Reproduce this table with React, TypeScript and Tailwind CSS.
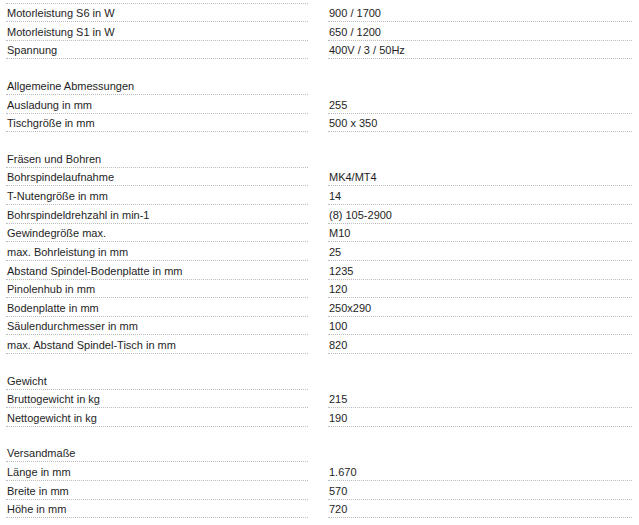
type Row = { label: string; value?: string; header?: boolean; spacer?: boolean };

const rows: Row[] = [
  { label: 'Motorleistung S6 in W', value: '900 / 1700' },
  { label: 'Motorleistung S1 in W', value: '650 / 1200' },
  { label: 'Spannung', value: '400V / 3 / 50Hz' },
  { label: '', spacer: true },
  { label: 'Allgemeine Abmessungen', header: true },
  { label: 'Ausladung in mm', value: '255' },
  { label: 'Tischgröße in mm', value: '500 x 350' },
  { label: '', spacer: true },
  { label: 'Fräsen und Bohren', header: true },
  { label: 'Bohrspindelaufnahme', value: 'MK4/MT4' },
  { label: 'T-Nutengröße in mm', value: '14' },
  { label: 'Bohrspindeldrehzahl in min-1', value: '(8) 105-2900' },
  { label: 'Gewindegröße max.', value: 'M10' },
  { label: 'max. Bohrleistung in mm', value: '25' },
  { label: 'Abstand Spindel-Bodenplatte in mm', value: '1235' },
  { label: 'Pinolenhub in mm', value: '120' },
  { label: 'Bodenplatte in mm', value: '250x290' },
  { label: 'Säulendurchmesser in mm', value: '100' },
  { label: 'max. Abstand Spindel-Tisch in mm', value: '820' },
  { label: '', spacer: true },
  { label: 'Gewicht', header: true },
  { label: 'Bruttogewicht in kg', value: '215' },
  { label: 'Nettogewicht in kg', value: '190' },
  { label: '', spacer: true },
  { label: 'Versandmaße', header: true },
  { label: 'Länge in mm', value: '1.670' },
  { label: 'Breite in mm', value: '570' },
  { label: 'Höhe in mm', value: '720' },
];

export default function App() {
  return (
    <div className="w-[639px] h-[525px] overflow-hidden bg-white text-[#1e1e1e] text-[11px] leading-none font-['Liberation_Sans',Arial,sans-serif]">
      {/* tail of the section above, only its rule is visible */}
      <div className="flex h-[3.5px]">
        <div className="ml-[6px] w-[302px] border-b border-dotted border-[#bdbdbd]" />
      </div>
      {rows.map((r, i) =>
        r.spacer ? (
          <div key={i} className="h-[16.85px]" />
        ) : (
          <div key={i} className="flex h-[18.65px]">
            <div className="ml-[6px] w-[302px] flex items-end pl-[1px] pb-[2px] border-b border-dotted border-[#bdbdbd]">
              {r.label}
            </div>
            {!r.header && (
              <div className="ml-[20px] w-[304px] flex items-end pl-[1px] pb-[2px] border-b border-dotted border-[#bdbdbd]">
                {r.value}
              </div>
            )}
          </div>
        )
      )}
    </div>
  );
}
